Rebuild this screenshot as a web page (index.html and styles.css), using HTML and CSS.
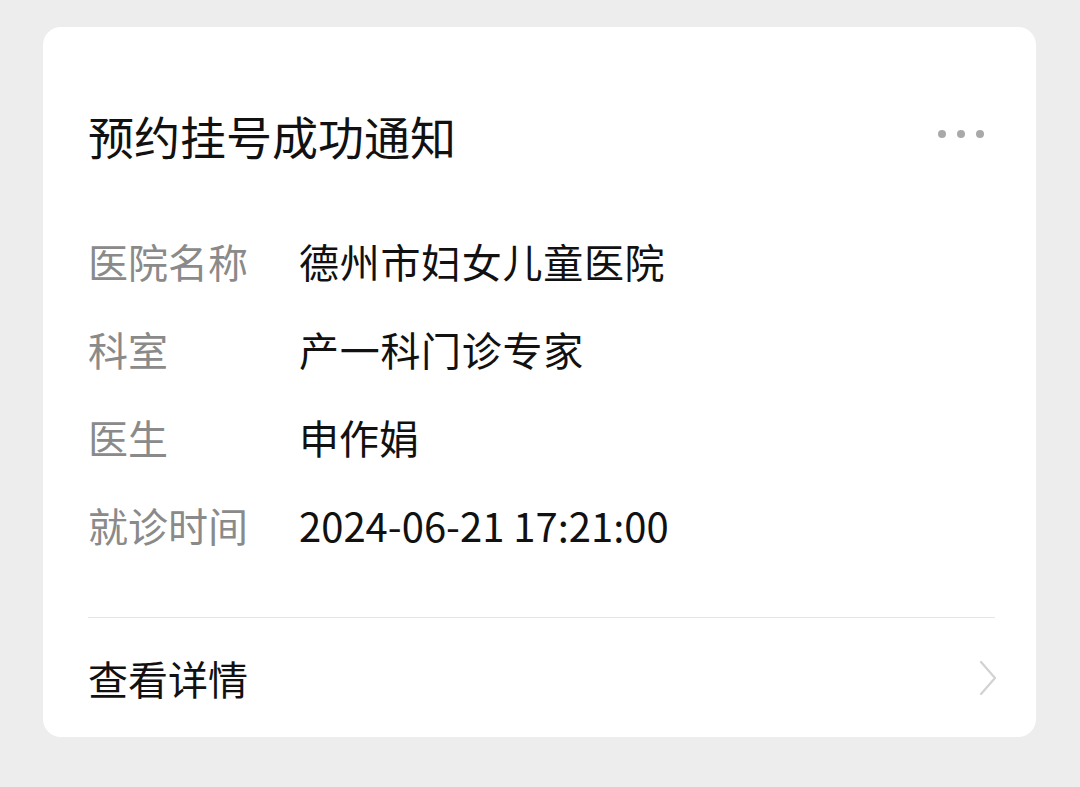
FILE: index.html
```html
<!DOCTYPE html>
<html lang="zh">
<head>
<meta charset="utf-8">
<link rel="stylesheet" href="styles.css">
</head>
<body>
<div class="card">
  <div class="header">
    <div class="title">预约挂号成功通知</div>
    <div class="more"><span></span><span></span><span></span></div>
  </div>
  <div class="rows">
    <div class="row"><div class="label">医院名称</div><div class="value wide">德州市妇女儿童医院</div></div>
    <div class="row"><div class="label">科室</div><div class="value wide">产一科门诊专家</div></div>
    <div class="row"><div class="label">医生</div><div class="value">申作娟</div></div>
    <div class="row"><div class="label">就诊时间</div><div class="value">2024-06-21 17:21:00</div></div>
  </div>
  <div class="divider"></div>
  <div class="footer">
    <div class="link">查看详情</div>
    <svg class="chev" width="18" height="36" viewBox="0 0 18 36"><path d="M2 2 L16 18 L2 34" fill="none" stroke="#d2d2d2" stroke-width="2.2" stroke-linecap="round" stroke-linejoin="round"/></svg>
  </div>
</div>
</body>
</html>
```
FILE: styles.css
```css
html, body {
  margin: 0;
  padding: 0;
  background: #ededed;
}
body {
  font-family: "Noto Sans CJK SC", "Noto Sans", sans-serif;
  color: #111;
  padding-top: 27px;
}
.card {
  margin-left: 43px;
  width: 993px;
  box-sizing: border-box;
  background: #fff;
  border-radius: 18px;
  padding: 0 41px 0 45px;
  height: 710px;
}
.header {
  display: flex;
  align-items: center;
  justify-content: space-between;
  padding-top: 78px;
}
.title {
  font-size: 46px;
  line-height: 60px;
  color: #111;
}
.more {
  display: flex;
  gap: 11px;
  margin-right: 11px;
  margin-top: -2px;
}
.more span {
  width: 8px;
  height: 8px;
  border-radius: 50%;
  background: #a9a9a9;
}
.rows {
  margin-top: 52px;
}
.row {
  display: flex;
  height: 88px;
  align-items: center;
  font-size: 40px;
}
.label {
  width: 211px;
  color: #8a8a8a;
  flex: none;
}
.value {
  color: #111;
}
.value.wide {
  letter-spacing: 0.7px;
}
.divider {
  margin-top: 48px;
  height: 1px;
  background: #e6e6e6;
}
.footer {
  display: flex;
  align-items: center;
  justify-content: space-between;
  height: 120px;
}
.link {
  font-size: 40px;
  color: #111;
}
.chev {
  margin-right: -2px;
}
```
